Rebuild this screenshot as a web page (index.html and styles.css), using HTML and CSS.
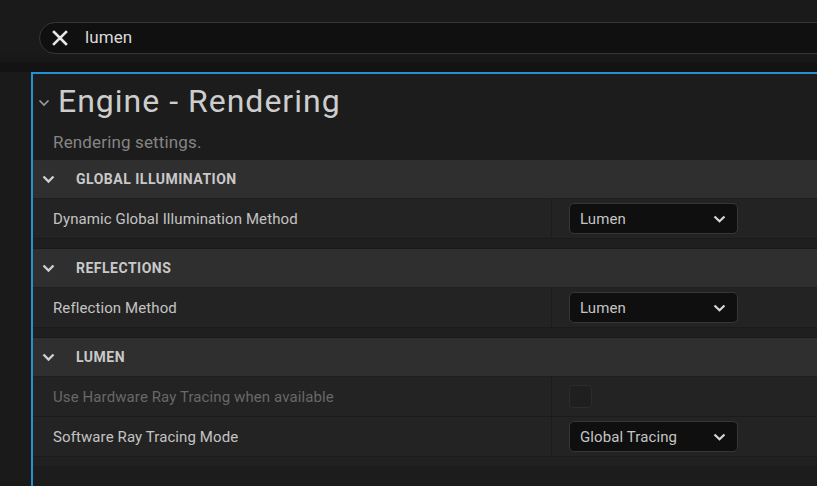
FILE: index.html
```html
<!DOCTYPE html>
<html lang="en">
<head>
<meta charset="utf-8">
<title>Engine - Rendering</title>
<link rel="stylesheet" href="styles.css">
</head>
<body>
<div class="page">
  <div class="search-bar">
    <div class="search">
      <svg class="x-icon" width="16" height="16" viewBox="0 0 16 16"><path d="M2 2L14 14M14 2L2 14" stroke="#e6e6e6" stroke-width="2.6" stroke-linecap="square" fill="none"/></svg>
      <span class="search-text">lumen</span>
    </div>
  </div>
  <div class="shade"></div>
  <div class="panel">
    <div class="title-row">
      <svg class="title-chev" width="12" height="8" viewBox="0 0 12 8"><path d="M1.5 1.5L6 6L10.5 1.5" stroke="#9a9a9a" stroke-width="1.7" fill="none"/></svg>
      <h1 class="title">Engine - Rendering</h1>
    </div>
    <p class="desc">Rendering settings.</p>

    <section class="group">
      <div class="group-header">
        <svg class="chev" width="13" height="9" viewBox="0 0 13 9"><path d="M1.5 1.5L6.5 6.5L11.5 1.5" stroke="#cfcfcf" stroke-width="2.4" fill="none"/></svg>
        <span class="group-title">GLOBAL ILLUMINATION</span>
      </div>
      <div class="row">
        <div class="label">Dynamic Global Illumination Method</div>
        <div class="value">
          <div class="dropdown"><span>Lumen</span><svg width="13" height="8" viewBox="0 0 13 8"><path d="M1.5 1.5L6.5 6.3L11.5 1.5" stroke="#d6d6d6" stroke-width="2.2" fill="none"/></svg></div>
        </div>
      </div>
    </section>
    <div class="group-gap"></div>

    <section class="group">
      <div class="group-header">
        <svg class="chev" width="13" height="9" viewBox="0 0 13 9"><path d="M1.5 1.5L6.5 6.5L11.5 1.5" stroke="#cfcfcf" stroke-width="2.4" fill="none"/></svg>
        <span class="group-title">REFLECTIONS</span>
      </div>
      <div class="row">
        <div class="label">Reflection Method</div>
        <div class="value">
          <div class="dropdown"><span>Lumen</span><svg width="13" height="8" viewBox="0 0 13 8"><path d="M1.5 1.5L6.5 6.3L11.5 1.5" stroke="#d6d6d6" stroke-width="2.2" fill="none"/></svg></div>
        </div>
      </div>
    </section>
    <div class="group-gap"></div>

    <section class="group">
      <div class="group-header">
        <svg class="chev" width="13" height="9" viewBox="0 0 13 9"><path d="M1.5 1.5L6.5 6.5L11.5 1.5" stroke="#cfcfcf" stroke-width="2.4" fill="none"/></svg>
        <span class="group-title">LUMEN</span>
      </div>
      <div class="row">
        <div class="label disabled">Use Hardware Ray Tracing when available</div>
        <div class="value">
          <div class="checkbox"></div>
        </div>
      </div>
      <div class="row">
        <div class="label">Software Ray Tracing Mode</div>
        <div class="value">
          <div class="dropdown"><span>Global Tracing</span><svg width="13" height="8" viewBox="0 0 13 8"><path d="M1.5 1.5L6.5 6.3L11.5 1.5" stroke="#d6d6d6" stroke-width="2.2" fill="none"/></svg></div>
        </div>
      </div>
    </section>
    <div class="group-end"></div>
  </div>
</div>
</body>
</html>
```

FILE: styles.css
```css
* { box-sizing: border-box; }

html, body {
  margin: 0;
  padding: 0;
  background: #1a1a1a;
  font-family: Roboto, "Noto Sans", "Liberation Sans", sans-serif;
  overflow: hidden;
}

.page {
  width: 817px;
  height: 486px;
  overflow: hidden;
  display: flex;
  flex-direction: column;
}

.search-bar {
  padding: 22px 0 0 39px;
  margin-right: -60px;
}

.search {
  height: 32px;
  border: 1px solid #363636;
  border-radius: 16px;
  background: #101010;
  display: flex;
  align-items: center;
  padding-left: 12px;
  gap: 17px;
}

.x-icon { flex: none; }

.search-text {
  color: #dadada;
  font-size: 17px;
  line-height: 20px;
  margin-top: -3px;
  letter-spacing: 0.1px;
}

.shade {
  height: 18px;
  background: linear-gradient(#191919 0, #181818 8px, #131313 9px, #121212 18px);
}

.panel {
  flex: 1;
  margin-left: 31px;
  margin-right: -60px;
  border-top: 2px solid #2590d2;
  border-left: 2px solid #2590d2;
  background: #1c1c1c;
}

.title-row {
  display: flex;
  align-items: center;
  padding: 9px 0 0 5px;
}

.title-chev {
  flex: none;
  margin-top: 4px;
  margin-right: 8px;
}

.title {
  margin: 0;
  font-weight: 400;
  font-size: 32px;
  line-height: 36px;
  letter-spacing: 1px;
  color: #cdcdcd;
}

.desc {
  margin: 13px 0 8px 20px;
  font-size: 17px;
  line-height: 20px;
  letter-spacing: 0.15px;
  color: #858585;
}

.group-header {
  height: 39px;
  background: #2f2f2f;
  border-bottom: 1px solid #1f1f1f;
  display: flex;
  align-items: center;
  padding-left: 9px;
  gap: 21px;
}

.chev { flex: none; margin-top: 1px; }

.group-title {
  font-weight: 700;
  font-size: 14px;
  color: #c9c9c9;
  letter-spacing: 0.5px;
}

.row {
  display: flex;
  height: 40px;
  background: #232323;
  border-bottom: 1px solid #1b1b1b;
}

.label {
  width: 518px;
  flex: none;
  display: flex;
  align-items: center;
  padding-left: 20px;
  font-size: 15px;
  letter-spacing: 0.1px;
  color: #c3c3c3;
}

.label.disabled { color: #686868; }

.value {
  flex: 1;
  display: flex;
  align-items: center;
  padding-left: 17px;
  border-left: 1px solid #1c1c1c;
}

.dropdown {
  width: 169px;
  height: 31px;
  background: #0f0f0f;
  border: 1px solid #363636;
  border-radius: 5px;
  display: flex;
  align-items: center;
  justify-content: space-between;
  padding: 0 11px 0 10px;
  font-size: 15px;
  letter-spacing: 0.1px;
  color: #c4c4c4;
}

.dropdown svg { flex: none; }

.checkbox {
  width: 23px;
  height: 23px;
  background: #1f1f1f;
  border: 1px solid #2c2c2c;
  border-radius: 4px;
}

.group-gap {
  height: 10px;
  background: #1f1f1f;
  border-bottom: 1px solid #1a1a1a;
}

.group-end {
  height: 9px;
  background: #202020;
}
```
